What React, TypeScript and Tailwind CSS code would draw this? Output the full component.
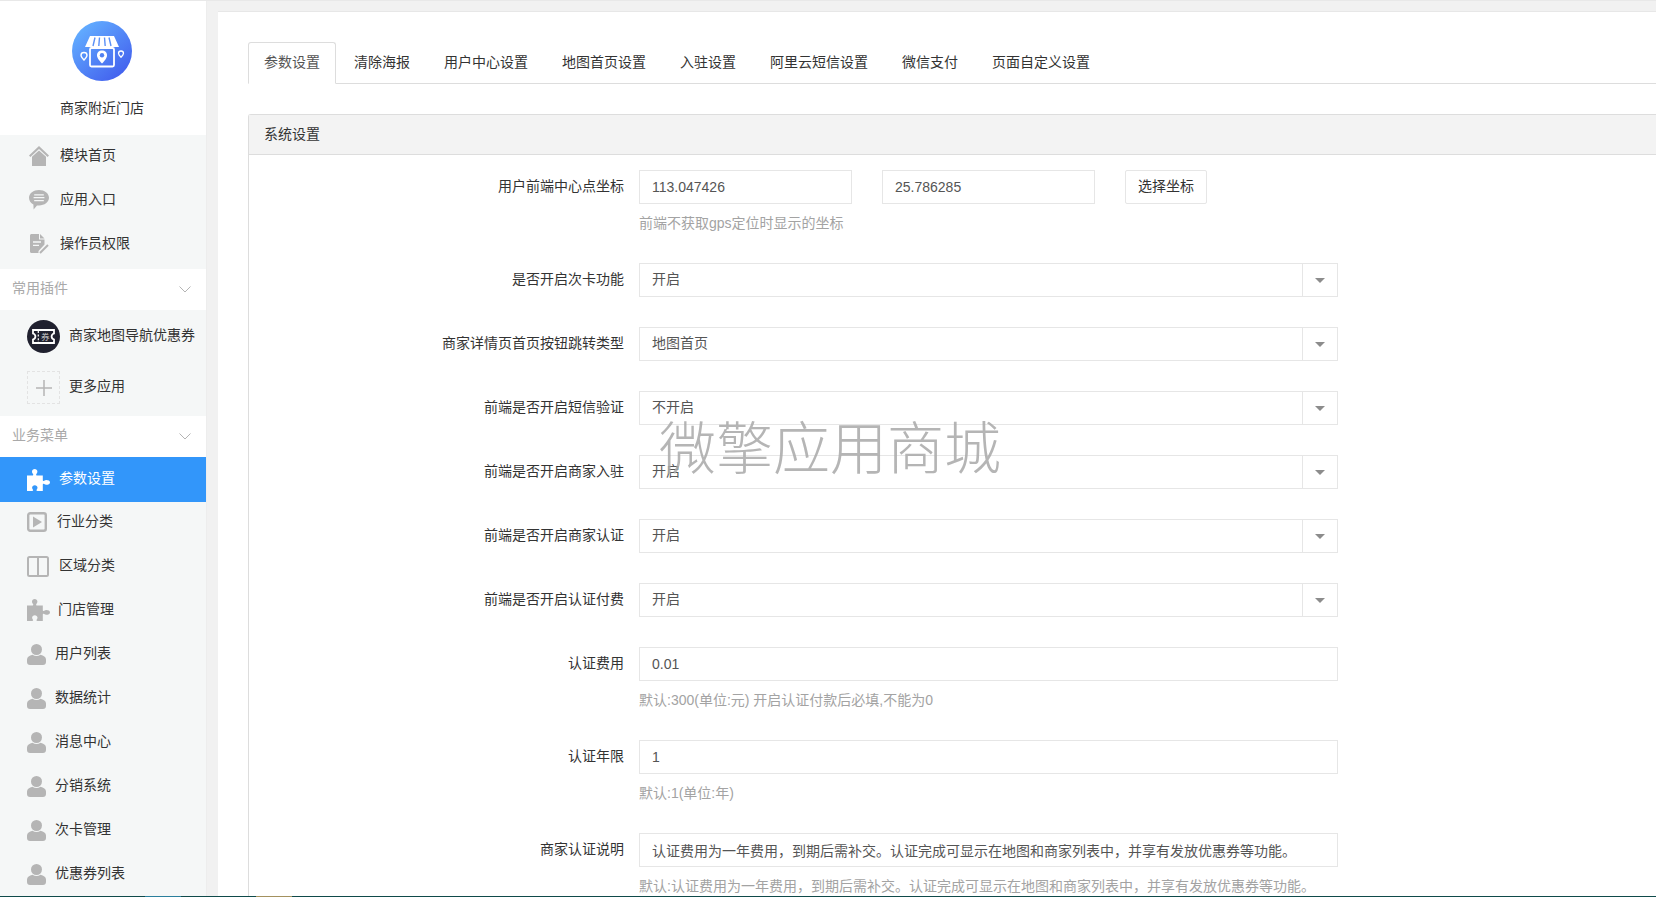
import type { ReactNode } from 'react';

const Home = () => (
    <svg viewBox="0 0 20 20" className="h-5 w-5 fill-[#b5b5b5]">
        <path d="M10 0 20 9.5 18.6 11 10 3 1.4 11 0 9.5Z" />
        <path d="M10 4.4 17 10.8V20H3V10.8Z" />
    </svg>
);

const Chat = () => (
    <svg viewBox="0 0 20 20" className="h-5 w-5">
        <path className="fill-[#b5b5b5]" d="M10 0C15.5 0 20 3.4 20 7.7S15.5 15.4 10 15.4H8L4.6 19.4 4.4 14.4C1.7 13 0 10.6 0 7.7 0 3.4 4.5 0 10 0Z" />
        <path className="stroke-[#f5f7f7]" strokeWidth="1.3" d="M5.2 4.8H14.8M4.6 7.7H15.4M5.2 10.6H14.8" />
    </svg>
);

const FileEdit = () => (
    <svg viewBox="0 0 19 20" className="h-5 w-[19px]">
        <path className="fill-[#b5b5b5]" d="M0 1.5C0 .7.7 0 1.5 0H9V5.5H14.5V10.5L8.5 17V19H1.5C.7 19 0 18.3 0 17.5Z" />
        <path className="fill-[#b5b5b5]" d="M10 0 14.5 4.5H10Z" />
        <path className="stroke-[#f5f7f7]" strokeWidth="1.3" d="M3 8H11M3 11.3H9" />
        <path className="stroke-[#b5b5b5]" strokeWidth="2" d="M10 19 18 11" />
    </svg>
);

const Puzzle = ({ tone }: { tone: string }) => (
    <svg viewBox="0 0 23 22" className={`h-[22px] w-[23px] ${tone}`}>
        <path d="M0 6.5H5.2C6.2 6.5 6.6 5.8 6 5 5.2 4 5 3.4 5 2.6 5 1.1 6.2 0 7.7 0S10.4 1.1 10.4 2.6C10.4 3.4 10.1 4 9.4 5 8.8 5.8 9.2 6.5 10.2 6.5H15.8V11.2C15.8 12 16.5 12.3 17.2 11.8 17.9 11.2 18.4 11 19.2 11 21.3 11 23 11.7 23 13.4S21.3 15.8 19.2 15.8C18.4 15.8 17.9 15.6 17.2 15 16.5 14.5 15.8 14.8 15.8 15.6V22H10.4C9.4 22 9.2 21.2 9.8 20.5 10.3 19.8 10.5 19.3 10.5 18.6 10.5 17.2 9.3 16.2 7.8 16.2S5.1 17.2 5.1 18.6C5.1 19.3 5.3 19.8 5.8 20.5 6.4 21.2 6.2 22 5.2 22H0Z" />
    </svg>
);

const PlayBox = () => (
    <svg viewBox="0 0 20 20" className="h-5 w-5">
        <rect x="1.2" y="1.2" width="17.6" height="17.6" rx="2" className="fill-none stroke-[#b5b5b5]" strokeWidth="2.4" />
        <path className="fill-[#b5b5b5]" d="M6 4.5 15 10 6 15.5Z" />
    </svg>
);

const Columns = () => (
    <svg viewBox="0 0 22 21" className="h-[21px] w-[22px]">
        <rect x="1" y="1" width="20" height="19" rx="1.5" className="fill-none stroke-[#b5b5b5]" strokeWidth="2" />
        <path className="stroke-[#b5b5b5]" strokeWidth="2" d="M11 1V20" />
    </svg>
);

const User = () => (
    <svg viewBox="0 0 19 21" className="h-[21px] w-[19px] fill-[#b5b5b5]">
        <ellipse cx="9.5" cy="5.5" rx="5.5" ry="5.5" />
        <path d="M0 15.5C0 13 2.5 11.6 5.5 10.8 8 12.5 11 12.5 13.5 10.8 16.5 11.6 19 13 19 15.5V18C19 19.8 17.8 21 16 21H3C1.2 21 0 19.8 0 18Z" />
    </svg>
);

const Logo = () => (
    <svg viewBox="0 0 60 60" className="h-[60px] w-[60px]">
        <defs>
            <linearGradient id="logo-bg" x1="0.15" y1="0.1" x2="0.85" y2="0.9">
                <stop offset="0" stopColor="#62adff" />
                <stop offset="1" stopColor="#4361ee" />
            </linearGradient>
        </defs>
        <circle cx="30" cy="30" r="30" fill="url(#logo-bg)" />
        <path fill="#fff" d="M18 15H42L47 26H13Z" />
        <path stroke="#5a90f7" strokeWidth="1.4" d="M23 16.5 21 25M27.5 16.5 26.8 25M32.5 16.5 33.2 25M37 16.5 39 25" />
        <rect x="18" y="27" width="24" height="18.5" rx="1.5" fill="none" stroke="#fff" strokeWidth="1.8" />
        <path fill="#fff" d="M30 29.5C33 29.5 35 31.6 35 34.2 35 37.2 32 40.4 30 42.5 28 40.4 25 37.2 25 34.2 25 31.6 27 29.5 30 29.5Z" />
        <circle cx="30" cy="34.2" r="2.2" fill="#4f80f3" />
        <path fill="none" stroke="#fff" strokeWidth="1.4" d="M12 31.5C13.8 31.5 15 32.8 15 34.2 15 35.8 13.3 37.6 12 39 10.7 37.6 9 35.8 9 34.2 9 32.8 10.2 31.5 12 31.5Z" />
        <path fill="none" stroke="#fff" strokeWidth="1.3" d="M49 30C50.5 30 51.5 31 51.5 32.3 51.5 33.6 50.1 35.1 49 36.2 47.9 35.1 46.5 33.6 46.5 32.3 46.5 31 47.5 30 49 30Z" />
    </svg>
);

const Coupon = () => (
    <svg viewBox="0 0 33 33" className="h-[33px] w-[33px]">
        <circle cx="16.5" cy="16.5" r="16.5" fill="#20212f" />
        <path
            fill="none"
            stroke="#fff"
            strokeWidth="1.8"
            d="M6 10H27V13.5C25.3 14 24.6 15.2 24.6 16.5S25.3 19 27 19.5V23H6V19.5C7.7 19 8.4 17.8 8.4 16.5S7.7 14 6 13.5Z"
        />
        <path stroke="#fff" strokeWidth="1.2" strokeDasharray="2 1.6" d="M11.3 11V22" />
        <text x="18.2" y="20" textAnchor="middle" fontSize="8.5" fill="#c9c9c9">券</text>
    </svg>
);

const Chevron = () => (
    <svg viewBox="0 0 12 7" className="h-[7px] w-[12px] fill-none stroke-[#b4b4b4]" strokeWidth="1">
        <path d="M.5.5 6 6 11.5.5" />
    </svg>
);

function MenuItem({ icon, label, box, active }: { icon: ReactNode; label: string; box: string; active?: boolean }) {
    return (
        <div className={`flex items-center pl-[27px] text-[14px] ${active ? 'h-[45px] bg-[#3296fa] text-white' : 'h-10 text-[#333]'}`}>
            <span className={`flex shrink-0 items-center ${box}`}>{icon}</span>
            <span className={active ? 'pb-[3px]' : 'pb-[2px]'}>{label}</span>
        </div>
    );
}

function Section({ title }: { title: string }) {
    return (
        <div className="flex h-[41px] items-center justify-between pl-3 pr-[15px] text-[14px] text-[#a9a9a9]">
            <span className="pb-[2px]">{title}</span>
            <Chevron />
        </div>
    );
}

function Sidebar() {
    const users = ['用户列表', '数据统计', '消息中心', '分销系统', '次卡管理', '优惠券列表'];
    return (
        <aside className="w-[207px] shrink-0 overflow-hidden border-r border-[#ededed] bg-white">
            <div className="flex h-[134px] flex-col items-center pr-[2px] pt-5">
                <Logo />
                <div className="mt-[17px] text-[14px] leading-5 text-[#333]">商家附近门店</div>
            </div>
            <div className="flex flex-col gap-1 bg-[#f5f7f7] pb-[5px] pt-px">
                <div className="flex h-10 items-center pl-[29px] text-[14px] text-[#333]">
                    <span className="flex w-[31px] items-center"><Home /></span>
                    <span className="pb-px">模块首页</span>
                </div>
                <div className="flex h-10 items-center pl-[29px] text-[14px] text-[#333]">
                    <span className="flex w-[31px] items-center"><Chat /></span>
                    <span className="pb-px">应用入口</span>
                </div>
                <div className="flex h-10 items-center pl-[30px] text-[14px] text-[#333]">
                    <span className="flex w-[30px] items-center"><FileEdit /></span>
                    <span className="pb-px">操作员权限</span>
                </div>
            </div>
            <Section title="常用插件" />
            <div className="flex h-[106px] flex-col bg-[#f5f7f7] pl-[27px] text-[14px] text-[#333]">
                <div className="flex h-[52px] items-center">
                    <span className="w-[42px]"><Coupon /></span>
                    <span className="pb-[2px]">商家地图导航优惠券</span>
                </div>
                <div className="flex h-[51px] items-center">
                    <span className="w-[42px]">
                        <span className="flex h-[33px] w-[33px] items-center justify-center border border-dashed border-[#e3e3e3]">
                            <svg viewBox="0 0 16 16" className="h-4 w-4 stroke-[#b5b5b5]" strokeWidth="1.5">
                                <path d="M8 0V16M0 8H16" />
                            </svg>
                        </span>
                    </span>
                    <span className="pb-[2px]">更多应用</span>
                </div>
            </div>
            <Section title="业务菜单" />
            <MenuItem active icon={<Puzzle tone="fill-white" />} label="参数设置" box="w-8" />
            <div className="flex flex-col gap-1 bg-[#f5f7f7] pb-10">
                <MenuItem icon={<PlayBox />} label="行业分类" box="w-[30px]" />
                <MenuItem icon={<Columns />} label="区域分类" box="w-8" />
                <MenuItem icon={<Puzzle tone="fill-[#b5b5b5]" />} label="门店管理" box="w-[31px]" />
                {users.map((u) => (
                    <MenuItem key={u} icon={<User />} label={u} box="w-7" />
                ))}
            </div>
        </aside>
    );
}

function FormRow({ label, help, children }: { label: string; help?: string; children: ReactNode }) {
    return (
        <div className="mb-[30px] flex">
            <label className="w-[376px] shrink-0 pr-[1px] text-right text-[14px] leading-[33px] text-[#333]">{label}</label>
            <div className="ml-[14px] w-[699px] shrink-0">
                {children}
                {help && <div className="h-[29px] whitespace-nowrap pt-[9px] text-[14px] leading-5 text-[#a3a3a3]">{help}</div>}
            </div>
        </div>
    );
}

function TextField({ value }: { value: string }) {
    return (
        <input
            readOnly
            value={value}
            className="block h-[34px] w-full border border-[#e6e6e6] bg-white px-3 pb-px text-[14px] text-[#555] outline-none"
        />
    );
}

function SelectField({ value }: { value: string }) {
    return (
        <div className="flex h-[34px] border border-[#e6e6e6] bg-white text-[14px] text-[#555]">
            <div className="flex-1 px-3 leading-[31px]">{value}</div>
            <div className="flex w-[35px] items-center justify-center border-l border-[#e6e6e6]">
                <span className="h-0 w-0 border-x-[5px] border-t-[5px] border-x-transparent border-t-[#8c8c8c]" />
            </div>
        </div>
    );
}

const tabs = ['参数设置', '清除海报', '用户中心设置', '地图首页设置', '入驻设置', '阿里云短信设置', '微信支付', '页面自定义设置'];

const selects = [
    ['是否开启次卡功能', '开启'],
    ['商家详情页首页按钮跳转类型', '地图首页'],
    ['前端是否开启短信验证', '不开启'],
    ['前端是否开启商家入驻', '开启'],
    ['前端是否开启商家认证', '开启'],
    ['前端是否开启认证付费', '开启'],
];

const notice = '认证费用为一年费用，到期后需补交。认证完成可显示在地图和商家列表中，并享有发放优惠券等功能。';

export default function App() {
    return (
        <div className="relative flex h-screen flex-col overflow-hidden border-t border-[#e8e8e8] bg-[#f1f1f1] font-['Liberation_Sans','Noto_Sans_CJK_SC',sans-serif]">
            <div className="flex min-h-0 flex-1">
                <Sidebar />
                <main className="min-w-0 flex-1 overflow-hidden pl-[11px] pt-[10px]">
                    <div className="h-full overflow-hidden border-t border-[#e7e7e7] bg-white pl-[30px] pt-[30px]">
                        <div className="flex h-[42px] border-b border-[#ddd]">
                            {tabs.map((t, i) => (
                                <div
                                    key={t}
                                    className={`mr-[2px] h-[42px] rounded-t-[3px] border px-[15px] text-[14px] leading-[39px] ${
                                        i === 0
                                            ? 'border-[#ddd] border-b-white text-[#555]'
                                            : 'border-transparent text-[#333]'
                                    }`}
                                >
                                    {t}
                                </div>
                            ))}
                        </div>
                        <div className="mt-[30px] rounded-tl-[3px] border-l border-t border-[#ddd]">
                            <div className="h-10 border-b border-[#ddd] bg-[#f3f3f3] pl-[15px] text-[14px] leading-[39px] text-[#333]">
                                系统设置
                            </div>
                            <div className="pt-[15px]">
                                <div className="mb-[30px] flex">
                                    <label className="w-[376px] shrink-0 pr-[1px] text-right text-[14px] leading-[33px] text-[#333]">
                                        用户前端中心点坐标
                                    </label>
                                    <div className="ml-[14px]">
                                        <div className="flex">
                                            <div className="w-[213px]"><TextField value="113.047426" /></div>
                                            <div className="ml-[30px] w-[213px]"><TextField value="25.786285" /></div>
                                            <div className="ml-[30px] h-[34px] w-[82px] rounded-[2px] border border-[#e6e6e6] text-center text-[14px] leading-[31px] text-[#333]">
                                                选择坐标
                                            </div>
                                        </div>
                                        <div className="h-[29px] pt-[9px] text-[14px] leading-5 text-[#a3a3a3]">前端不获取gps定位时显示的坐标</div>
                                    </div>
                                </div>
                                {selects.map(([label, value]) => (
                                    <FormRow key={label} label={label}>
                                        <SelectField value={value} />
                                    </FormRow>
                                ))}
                                <FormRow label="认证费用" help="默认:300(单位:元) 开启认证付款后必填,不能为0">
                                    <TextField value="0.01" />
                                </FormRow>
                                <FormRow label="认证年限" help="默认:1(单位:年)">
                                    <TextField value="1" />
                                </FormRow>
                                <FormRow label="商家认证说明" help={`默认:${notice}`}>
                                    <TextField value={notice} />
                                </FormRow>
                            </div>
                        </div>
                    </div>
                </main>
            </div>
            <div className="flex h-px shrink-0 bg-[#0f4a4a]">
                <div className="ml-[145px] w-9 bg-[#2a7f9c]" />
                <div className="ml-[75px] w-9 bg-[#a3915f]" />
            </div>
            <div className="pointer-events-none absolute left-[659px] top-[416px] text-[57px] font-light leading-[64px] text-[#a8a8a8]/85">
                微擎应用商城
            </div>
        </div>
    );
}
